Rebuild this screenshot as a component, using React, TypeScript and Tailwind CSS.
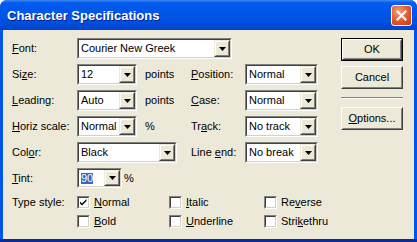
import type React from "react"

const font = "font-['Liberation_Sans',Arial,sans-serif]"

function Arrow() {
  return (
    <svg width="7" height="4" viewBox="0 0 7 4" className="block">
      <path d="M0 0h7L3.5 4z" fill="#000" />
    </svg>
  )
}

function DropButton() {
  return (
    <div className="h-full w-[16px] border border-t-[#ECE9D8] border-l-[#ECE9D8] border-r-[#404040] border-b-[#404040]">
      <div className="flex h-full items-center justify-center border border-t-white border-l-white border-r-[#808080] border-b-[#808080] bg-[#ECE9D8]">
        <Arrow />
      </div>
    </div>
  )
}

function Sunken({ className, children }: { className?: string; children: React.ReactNode }) {
  return (
    <div className={`border border-t-[#808080] border-l-[#808080] border-r-white border-b-white ${className ?? ""}`}>
      <div className="flex h-full items-stretch border border-t-[#404040] border-l-[#404040] border-r-[#D4D0C8] border-b-[#D4D0C8] bg-white">
        {children}
      </div>
    </div>
  )
}

function Combo({ width, value }: { width: string; value: string }) {
  return (
    <Sunken className={`h-[21px] ${width}`}>
      <div className="flex flex-1 items-center pl-[2px] text-black">{value}</div>
      <DropButton />
    </Sunken>
  )
}

function Label({ children, className }: { children: React.ReactNode; className?: string }) {
  return <div className={`flex items-center text-black ${className ?? ""}`}>{children}</div>
}

function Check({ checked, children, width }: { checked?: boolean; children: React.ReactNode; width: string }) {
  return (
    <div className={`flex h-[13px] items-center ${width}`}>
      <Sunken className="h-[13px] w-[13px] shrink-0">
        {checked ? (
          <svg width="9" height="9" viewBox="0 0 9 9" className="m-auto block">
            <path d="M1 3.5l2 2 4.5-4.5v2L3 7.5 1 5.5z" fill="#000" />
          </svg>
        ) : null}
      </Sunken>
      <span className="ml-[4px]">{children}</span>
    </div>
  )
}

function Button({ children, isDefault }: { children: React.ReactNode; isDefault?: boolean }) {
  return (
    <div className={`h-[23px] w-[62px] ${isDefault ? "border border-black" : ""}`}>
      <div className="h-full border border-t-white border-l-white border-r-[#404040] border-b-[#404040]">
        <div className="flex h-full items-center justify-center border border-t-[#ECE9D8] border-l-[#ECE9D8] border-r-[#808080] border-b-[#808080] bg-[#ECE9D8] text-black">
          {children}
        </div>
      </div>
    </div>
  )
}

export default function App() {
  return (
    <div className={`h-[242px] w-[417px] overflow-hidden rounded-t-[7px] bg-[#0055EA] text-[11px] leading-none ${font}`}>
      <div className="flex h-[30px] items-center justify-between bg-[linear-gradient(to_bottom,#3C8CF8_0%,#0A5FEC_8%,#0058EE_20%,#0055E5_55%,#004DDD_80%,#0041CC_100%)] pl-[7px] pr-[5px]">
        <div className="text-[13px] font-bold text-white [text-shadow:1px_1px_0_#0A1E88]">Character Specifications</div>
        <div className="flex h-[21px] w-[21px] items-center justify-center rounded-[3px] border border-white bg-[radial-gradient(circle_at_35%_30%,#F29A7C_0%,#E0572F_55%,#C33A12_100%)]">
          <svg width="11" height="11" viewBox="0 0 11 11">
            <path d="M1.5 1.5l8 8M9.5 1.5l-8 8" stroke="#fff" strokeWidth="2.2" strokeLinecap="square" />
          </svg>
        </div>
      </div>
      <div className="mx-[3px] flex h-[209px] bg-[#ECE9D8] pl-[9px] pt-[8px]">
        <div className="flex w-[329px] flex-col gap-[5px]">
          <div className="flex h-[21px]">
            <Label className="w-[65px]"><span><u>F</u>ont:</span></Label>
            <Combo width="w-[155px]" value="Courier New Greek" />
          </div>
          <div className="flex h-[21px]">
            <Label className="w-[65px]"><span>Si<u>z</u>e:</span></Label>
            <Combo width="w-[60px]" value="12" />
            <Label className="ml-[8px] w-[46px]">points</Label>
            <Label className="w-[54px]"><span><u>P</u>osition:</span></Label>
            <Combo width="w-[73px]" value="Normal" />
          </div>
          <div className="flex h-[21px]">
            <Label className="w-[65px]"><span><u>L</u>eading:</span></Label>
            <Combo width="w-[60px]" value="Auto" />
            <Label className="ml-[8px] w-[46px]">points</Label>
            <Label className="w-[54px]"><span><u>C</u>ase:</span></Label>
            <Combo width="w-[73px]" value="Normal" />
          </div>
          <div className="flex h-[21px]">
            <Label className="w-[65px]"><span><u>H</u>oriz scale:</span></Label>
            <Combo width="w-[60px]" value="Normal" />
            <Label className="ml-[8px] w-[46px]">%</Label>
            <Label className="w-[54px]"><span>Tr<u>a</u>ck:</span></Label>
            <Combo width="w-[73px]" value="No track" />
          </div>
          <div className="flex h-[21px]">
            <Label className="w-[65px]"><span>Col<u>o</u>r:</span></Label>
            <Combo width="w-[100px]" value="Black" />
            <Label className="ml-[14px] w-[54px]"><span>Line <u>e</u>nd:</span></Label>
            <Combo width="w-[73px]" value="No break" />
          </div>
          <div className="flex h-[20px]">
            <Label className="w-[65px]"><span><u>T</u>int:</span></Label>
            <Sunken className="h-[20px] w-[45px]">
              <div className="flex flex-1 items-center pl-[2px]">
                <span className="bg-[#316AC5] text-white">90</span>
              </div>
              <DropButton />
            </Sunken>
            <Label className="ml-[2px]">%</Label>
          </div>
          <div className="mt-[3px] flex flex-col gap-[6px]">
            <div className="flex">
              <Label className="w-[65px]">Type style:</Label>
              <Check checked width="w-[92px]"><u>N</u>ormal</Check>
              <Check width="w-[95px]"><u>I</u>talic</Check>
              <Check width="w-[70px]">Re<u>v</u>erse</Check>
            </div>
            <div className="flex pl-[65px]">
              <Check width="w-[92px]"><u>B</u>old</Check>
              <Check width="w-[95px]"><u>U</u>nderline</Check>
              <Check width="w-[70px]">Stri<u>k</u>ethru</Check>
            </div>
          </div>
        </div>
        <div className="flex flex-col">
          <Button isDefault>OK</Button>
          <div className="mt-[5px]">
            <Button>Cancel</Button>
          </div>
          <div className="mt-[8px] h-[2px] w-[62px] border-t border-b border-t-[#808080] border-b-white" />
          <div className="mt-[8px]">
            <Button><span><u>O</u>ptions...</span></Button>
          </div>
        </div>
      </div>
      <div className="h-[3px] bg-[#0A2A9A]" />
    </div>
  )
}
